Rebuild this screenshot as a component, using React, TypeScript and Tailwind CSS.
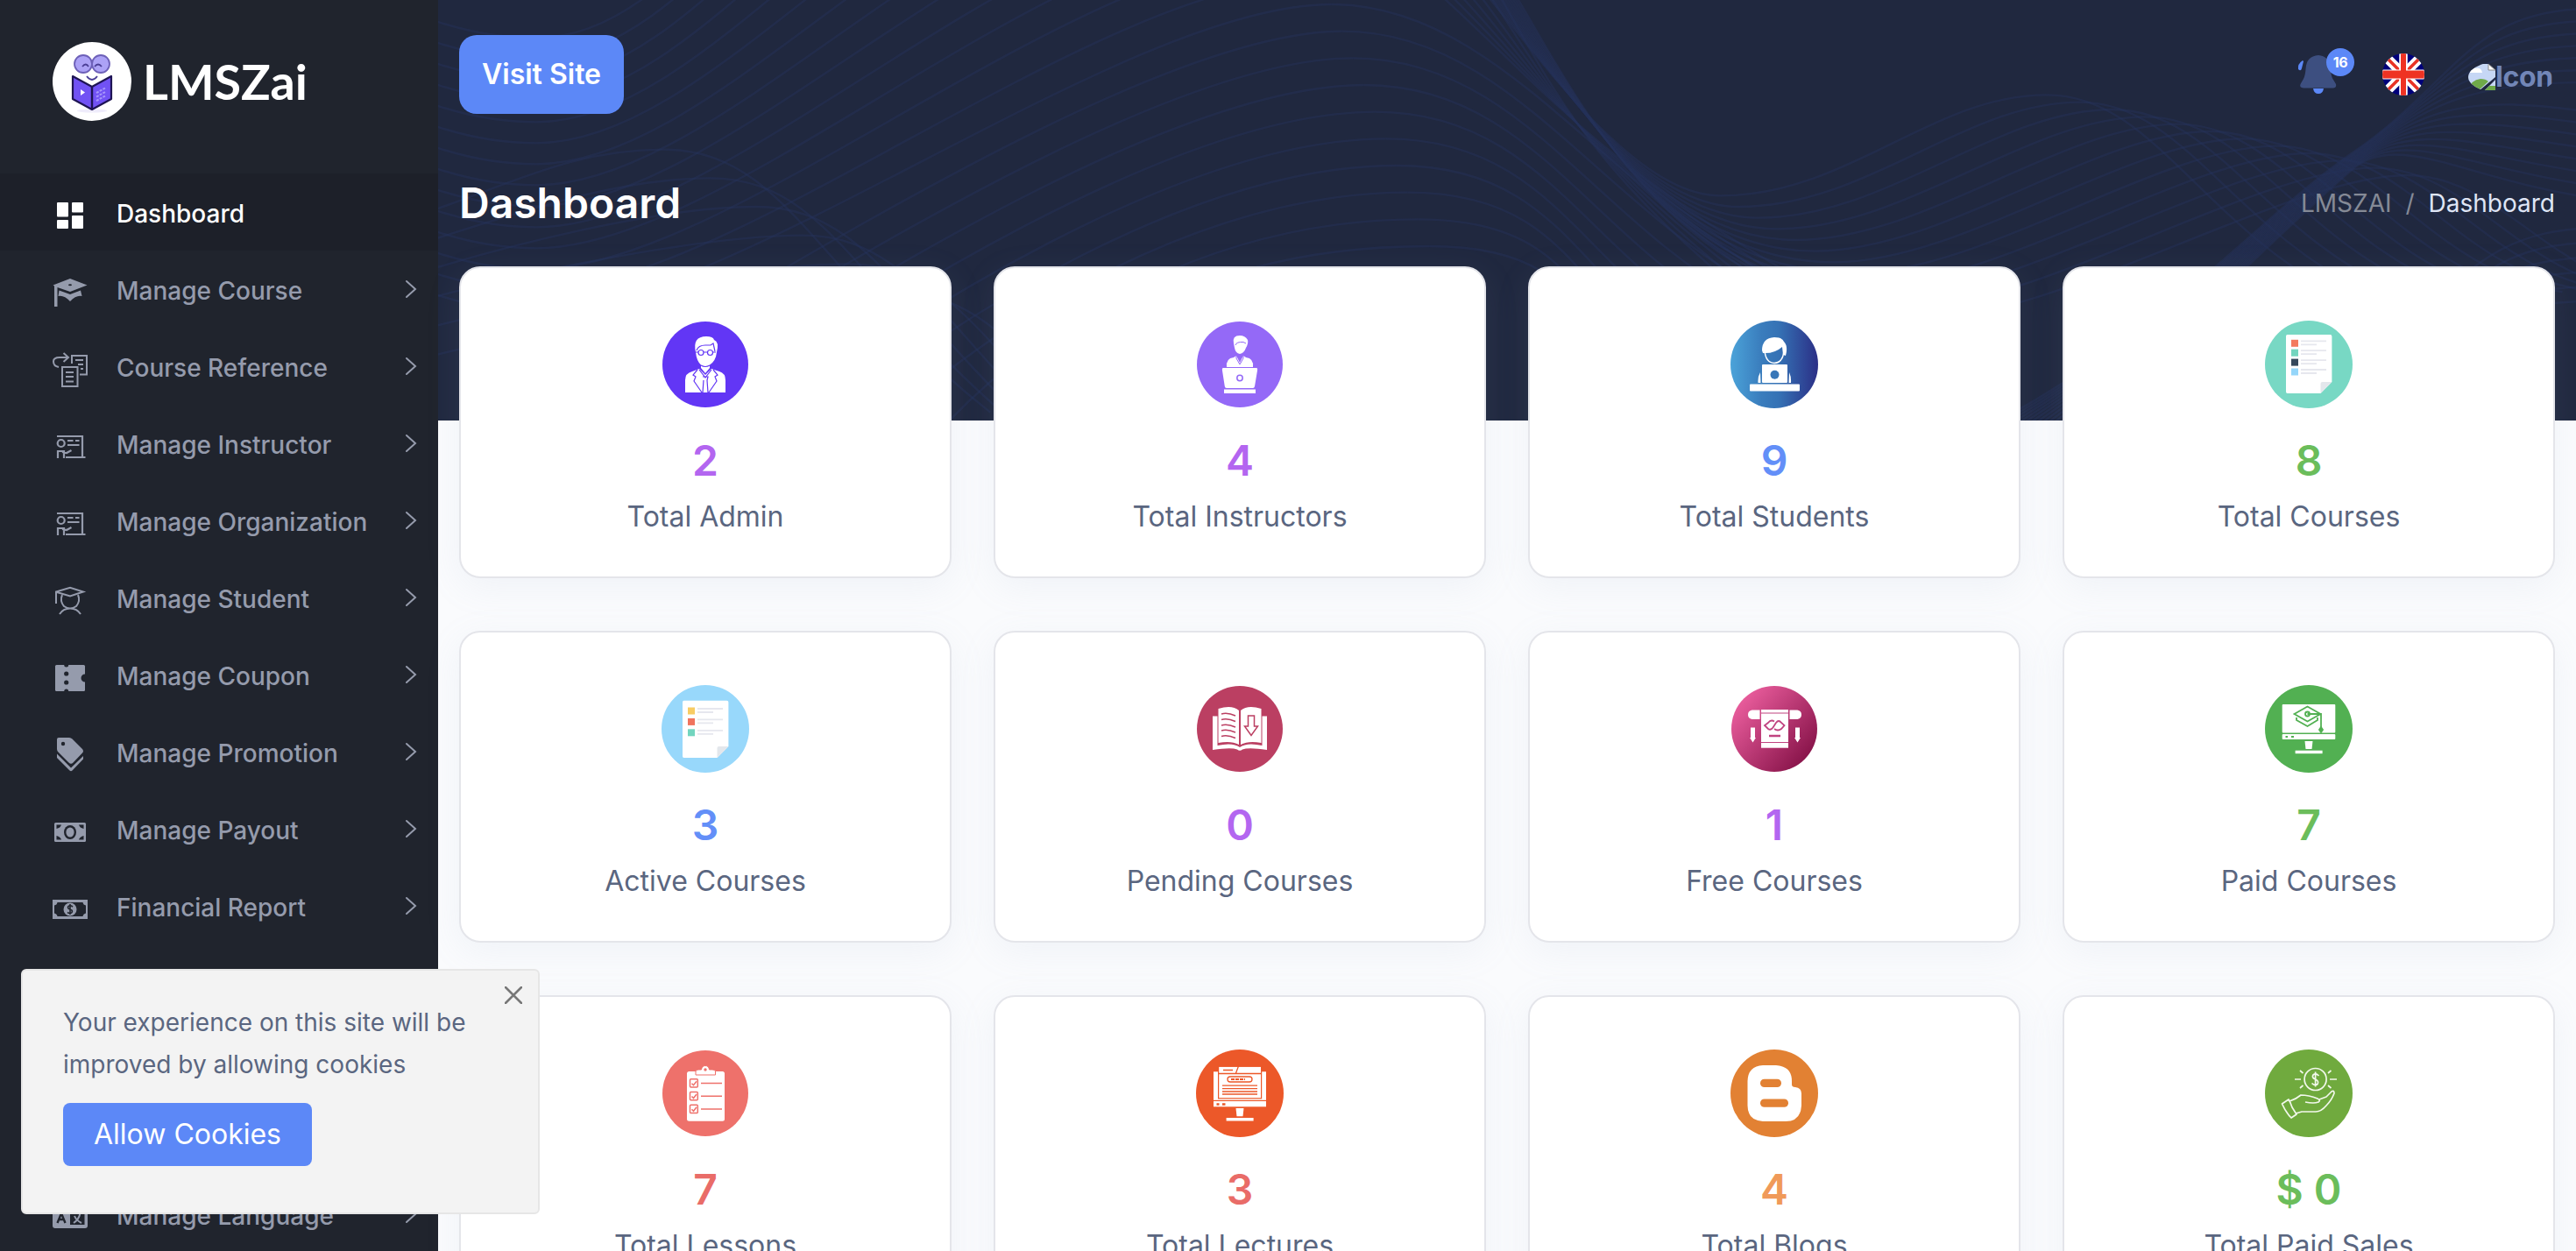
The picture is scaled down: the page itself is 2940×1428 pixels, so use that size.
import React from "react";

const INK = "#20242d";
const range = (n: number) => Array.from({ length: n }, (_, i) => i);

/* ---------- header line pattern ---------- */

function wavePaths(): string[] {
  const out: string[] = [];
  // long swells: left trough, tall crest, fall to the right
  range(23).forEach((k) => {
    const t = 130 + 72 * k;
    const cy = 15 + 92 * (k - 13);
    const cx = 655 + (k - 13) * 8;
    const end = 672 + k * 9;
    if (k < 14) {
      out.push(
        `M-60,${t - 200} C-20,${t - 60} 30,${t} 72,${t} C215,${t} ${cx - 270 + k * 9},${cy} ${cx},${cy}`
      );
    } else {
      out.push(`M${60 + (k - 14) * 45},1440 C${200 + (k - 14) * 35},1100 ${cx - 150},${cy} ${cx},${cy}`);
    }
    if (k >= 13) {
      const d = k - 13;
      out.push(`M${cx},${cy} C${cx + 120},${cy} ${850 - d * 2},${620 + d * 60} ${975 - d * 10},${940 + d * 40}`);
    } else if (k % 2 === 0) {
      out.push(`M${725 + k * 4},-60 C${800 + k},250 ${850 - k},560 ${990 - k * 2},${end + 260}`);
    }
  });
  // centre-right swells
  range(12).forEach((i) => {
    const ty = 670 + i * 38;
    const tx = 940 + i * 14;
    const px = 1180 + i * 24;
    const py = 325 + i * 25;
    out.push(
      `M${765 + i * 2},-40 C${815 + i},240 ${880 + i * 2},${ty} ${tx},${ty} C${tx + 95},${ty} ${px - 85},${py} ${px},${py} C${px + 75},${py} ${px + 110},${py + 420} ${px + 210},1000`
    );
  });
  // right bundle fanning towards the top edge
  range(15).forEach((i) => {
    const y = 30 + i * 42;
    out.push(
      `M${1120 + i * 5},${1500} C${1260 + i * 2},${1180 - i * 6} ${1330 + i * 3},${760 - i * 4} ${1405},${520 + i * 4} S${1490},${y} ${1580},${y + (i > 6 ? 60 : 0)}`
    );
  });
  // lower-left hills
  range(6).forEach((i) => {
    const px = 165 + i * 34;
    const py = 512 + i * 98;
    out.push(
      `M-30,${py + 250} C50,${py + 130} ${px - 70},${py} ${px},${py} C${px + 90},${py} ${px + 110},${py + 420} ${px + 240},${py + 900}`
    );
  });
  // lower-right hills
  range(6).forEach((i) => {
    out.push(`M${1450 + i * 8},1100 C${1500 + i * 6},${850 + i * 40} 1530,${790 + i * 50} 1580,${780 + i * 50}`);
  });
  return out;
}

function Waves() {
  return (
    <svg className="absolute inset-0 h-full w-full" viewBox="0 0 1568 1440" preserveAspectRatio="none" fill="none">
      {wavePaths().map((d, i) => (
        <path key={i} d={d} stroke="#263259" strokeOpacity="0.48" strokeWidth="2.4" vectorEffect="non-scaling-stroke" />
      ))}
    </svg>
  );
}

/* ---------- sidebar icons (40 x 40) ---------- */

const icons: Record<string, React.ReactNode> = {
  dash: (
    <>
      <rect x="5" y="5" width="13" height="16.500" rx="1" />
      <rect x="5" y="25" width="13" height="10" rx="1" />
      <rect x="22" y="5" width="13" height="11.500" rx="1" />
      <rect x="22" y="20" width="13" height="15" rx="1" />
    </>
  ),
  cap: (
    <>
      <path d="M20 4L39.500 11.500L20 19L5.500 14V36H2V12.500L.500 11.500Z" />
      <path d="M7.500 17.500L20 22L32 17.500L33.500 24Q27 22.500 20 30Q13 22.500 6.500 24Z" />
      <ellipse cx="20" cy="11.200" rx="2" ry="1" fill={INK} />
    </>
  ),
  ref: (
    <g fill="none" stroke="currentColor" strokeWidth="2">
      <path d="M7 17Q1 16 1 10.500Q1 6 8 6H18M12.500 1L18 6L12.500 11" />
      <path d="M22 13V4H39V25.500H31M26 9H35M29 14H35M32 19H35" />
      <rect x="11" y="17" width="17.500" height="22" />
      <path d="M15 23H24M15 28H24M15 33.500H24" />
    </g>
  ),
  teach: (
    <g fill="none" stroke="currentColor" strokeWidth="2.200">
      <path d="M5 8H34V31M15 32H37.500" />
      <circle cx="9.700" cy="16" r="4" />
      <path d="M6 33V25H13V33M11 26L16 27L21.500 24M17 13H23.500M26 13H30.500M17 18H30.500" />
    </g>
  ),
  student: (
    <g fill="none" stroke="currentColor" strokeWidth="2">
      <path d="M4 23V9.500L20 4.800L35 9.500L20 14.500L5 10" />
      <path d="M11 13Q8 20 13 26Q20 31 27 26Q32 20 29 13M8 35Q12 28.500 20 28.500T32 35" />
    </g>
  ),
  coupon: (
    <>
      <rect x="3" y="5" width="34" height="30" rx="1.500" />
      <g fill={INK}>
        <circle cx="15.700" cy="5" r="2.500" />
        <circle cx="15.700" cy="15" r="2.600" />
        <circle cx="15.700" cy="25" r="2.600" />
        <circle cx="15.700" cy="35" r="2.500" />
        <circle cx="37" cy="20" r="4.500" />
      </g>
    </>
  ),
  tag: (
    <>
      <path d="M7 0H19Q21 0 22.500 1.500L34 13Q36 15.500 34 17.500L23.500 28.500Q21 31 18.500 28.500L6.500 16.500Q5 15 5 13V2Q5 0 7 0Z" />
      <path d="M5 18.500L21 34.500L35 21V24.500L22.500 37.500Q21 39 19.500 37.500L5 23Z" />
      <circle cx="12" cy="7" r="2.200" fill={INK} />
    </>
  ),
  cash: (
    <>
      <rect x="2" y="9" width="36" height="22" rx="1.500" />
      <g fill={INK}>
        <ellipse cx="20" cy="20" rx="7" ry="8" />
        <path d="M4.500 11.500H10Q9 15 4.500 16ZM35.500 11.500H30Q31 15 35.500 16ZM4.500 28.500H10Q9 25 4.500 24ZM35.500 28.500H30Q31 25 35.500 24Z" />
      </g>
      <ellipse cx="20" cy="20" rx="4.600" ry="5.600" />
    </>
  ),
  bill: (
    <>
      <rect x="0" y="9" width="40" height="22" />
      <path d="M5.500 12H34.500Q35 15 38 15.500V24.500Q35 25 34.500 28H5.500Q5 25 2 24.500V15.500Q5 15 5.500 12Z" fill={INK} />
      <circle cx="20" cy="20" r="7.500" />
      <path d="M23 17Q20 14.800 18 16.500Q16.500 19 20 20T22 23.500Q20 25.500 17 23.500M20 14V26" fill="none" stroke={INK} strokeWidth="1.600" />
    </>
  ),
  lang: (
    <>
      <rect x="0" y="5" width="40" height="27" rx="3" />
      <rect x="20" y="8" width="16.500" height="20" fill={INK} />
      <path d="M5.500 26L10 15L14.500 26M7 22H13" fill="none" stroke={INK} strokeWidth="2.400" />
      <path d="M23 15H34M31.500 15Q30 22 24 26M25 18Q27 23 33 26M28.500 11V15" fill="none" stroke="currentColor" strokeWidth="2" />
    </>
  ),
};

const nav: [string, string][] = [
  ["cap", "Manage Course"],
  ["ref", "Course Reference"],
  ["teach", "Manage Instructor"],
  ["teach", "Manage Organization"],
  ["student", "Manage Student"],
  ["coupon", "Manage Coupon"],
  ["tag", "Manage Promotion"],
  ["cash", "Manage Payout"],
  ["bill", "Financial Report"],
];

function NavItem({ icon, label, active }: { icon: string; label: string; active?: boolean }) {
  return (
    <div className={`flex h-[88px] shrink-0 items-center pl-[60px] pr-6 ${active ? "bg-[#1d2029] text-white" : "text-[#959bac]"}`}>
      <svg className="mt-2 size-10 shrink-0" viewBox="0 0 40 40" fill="currentColor">
        {icons[icon]}
      </svg>
      <span className="ml-[33px] mt-1 whitespace-nowrap text-[28px] font-medium leading-10">{label}</span>
      {!active && (
        <svg className="ml-auto h-[22px] w-[14px] shrink-0" viewBox="0 0 14 22" fill="none" stroke="currentColor" strokeWidth="2" strokeLinecap="round">
          <path d="M2 2L12 11L2 20" />
        </svg>
      )}
    </div>
  );
}

function Logo() {
  return (
    <div className="flex h-[198px] shrink-0 items-start pl-[60px] pt-12">
      <svg width="300" height="90" viewBox="0 0 300 90">
        <circle cx="45" cy="45" r="45" fill="#fff" />
        <ellipse cx="45" cy="78.500" rx="17" ry="2" fill="#efecfb" />
        <g fill="#aca2f6" stroke="#6d60b8" strokeWidth="1.800">
          <circle cx="35" cy="25" r="10" />
          <circle cx="55" cy="25" r="10" />
        </g>
        <path d="M34 28Q38 23 41 28M48 28Q52 23 56 28M39 39Q45 47 51 39" fill="none" stroke="#4b3f96" strokeWidth="1.800" />
        <path d="M23 39L45 51L67 39V65L45 77L23 65Z" fill="#7152f4" stroke="#1e1454" strokeWidth="2.200" strokeLinejoin="round" />
        <path d="M45 51V77" stroke="#1e1454" strokeWidth="2.400" />
        <path d="M32 54L37 57.500L32 61Z" fill="#fff" />
        <path d="M50 58L61 52M50 62.500L61 56.500M50 67L61 61" stroke="#a796fb" strokeWidth="2" strokeDasharray="3 1.200" />
        <text x="103" y="65.500" fill="#fff" fontFamily="Lato, sans-serif" fontWeight="700" fontSize="54.500" textLength="188" lengthAdjust="spacingAndGlyphs">
          LMSZai
        </text>
      </svg>
    </div>
  );
}

/* ---------- card artwork (100 x 100) ---------- */

function Sheet({ top, colors, step, y0 }: { top: number; colors: string[]; step: number; y0: number }) {
  return (
    <>
      <path d={`M25.500 ${top}H74.500Q76.400 ${top} 76.400 ${top + 2}V70L63.500 83H25.500Q24 83 24 81V${top + 2}Q24 ${top} 25.500 ${top}Z`} fill="#fff" />
      <path d="M63.500 83V72Q63.500 70 65.500 70H76.400Z" fill="#e3e7ec" />
      {colors.map((c, i) => (
        <g key={c}>
          <rect x="30" y={y0 + i * step} width="8" height="8" fill={c} />
          <path d={`M41 ${y0 + 1.500 + i * step}H70M41 ${y0 + 5.500 + i * step}H59`} stroke="#e6e7ee" strokeWidth="1.800" />
        </g>
      ))}
    </>
  );
}

const art: Record<string, React.ReactNode> = {
  admin: (
    <>
      <circle cx="50" cy="50" r="49" fill="#6236f5" />
      <path d="M39 36Q35 18 51 18Q59 18 60 22Q66 24 63 36Q62 46 55 50.500V54L50 60L45 54V50.500Q40 46 39 36Z" fill="#fff" />
      <path d="M27 82V68Q27 60 35 58L43 55L50 62L57 55L66 58Q73 60 73 68V82Z" fill="#fff" />
      <g fill="none" stroke="#6236f5" strokeWidth="1.200">
        <path d="M40 34Q42 28 50 28H56L59 26L61 35M38.500 36H42M58.500 36H62M48 36H52.500" />
        <circle cx="45" cy="36.500" r="3" />
        <circle cx="55.500" cy="36.500" r="3" />
        <path d="M45 51Q50 54 55 51M41 56L36 62L39 64L37 69L46 82M59 56L64 62L61 64L63 69L54 82M43 56L50 65L57 56M47 64H53L52 68L53 82M48 68L47 82" />
      </g>
    </>
  ),
  instructor: (
    <>
      <circle cx="50" cy="50" r="49" fill="#9469f7" />
      <path d="M43 26Q41 17 50 17Q56 17 59 22Q60 26 57 31Q55 37 50 38Q45 37 44 31Z" fill="#fff" />
      <path d="M35 53Q34 43 43 42L46 40L50 48L54 40L57 42Q66 43 65 53Z" fill="#fff" />
      <path d="M31 54H69Q70.500 54 70 57L67 75Q66.500 77 65 77H35Q33 77 32.800 75L30 57Q29.500 54 31 54Z" fill="#fff" />
      <path d="M45 28Q46 24 54 24.500L57 26M46 38V43L50 50L54 43V38" fill="none" stroke="#9469f7" strokeWidth="1" />
      <circle cx="50" cy="65.500" r="3.200" fill="none" stroke="#9469f7" strokeWidth="1.500" />
      <rect x="32" y="78.500" width="36" height="4.500" fill="#fff" />
    </>
  ),
  student: (
    <>
      <defs>
        <linearGradient id="blue" x1="0" x2="1">
          <stop offset="0" stopColor="#4ba3d9" />
          <stop offset=".35" stopColor="#3a7dbd" />
          <stop offset=".55" stopColor="#3572b5" />
          <stop offset="1" stopColor="#2b2f86" />
        </linearGradient>
      </defs>
      <circle cx="50" cy="50" r="50" fill="url(#blue)" />
      <path d="M39 34Q40 48 50 48.500Q60 48 61 34" fill="none" stroke="#fff" strokeWidth="1.500" />
      <path d="M36 34Q36 20 50 19Q59 19 61 24Q66 29 63 40L60 39L59 30Q50 38 37 37Z" fill="#fff" />
      <path d="M34 59Q31 64 31.500 71H34.500ZM67 59Q69.500 64 69 71H66.500Z" fill="#fff" />
      <rect x="36" y="50" width="29" height="21" rx="1" fill="#fff" />
      <circle cx="50.500" cy="61.700" r="5" fill="#3877b8" />
      <rect x="22" y="72.500" width="57" height="8" rx="1" fill="#fff" />
    </>
  ),
  courses: (
    <>
      <circle cx="50" cy="50" r="50" fill="#78d8c4" />
      <Sheet top={16} y0={21.800} step={10.900} colors={["#f37b5f", "#73d5bf", "#35485c", "#95d6fa"]} />
    </>
  ),
  active: (
    <>
      <circle cx="50" cy="50" r="50" fill="#98d8fb" />
      <Sheet top={17.800} y0={25.500} step={12.400} colors={["#f8cc63", "#f0745e", "#73d5bf"]} />
    </>
  ),
  pending: (
    <>
      <circle cx="50" cy="50" r="49" fill="#bb3f62" />
      <path d="M19 35.500H24.500V69Q42 65 50 71Q58 65 75.500 69V35.500H81V74Q60 71 53 73.500Q50 76 47 73.500Q40 71 19 74Z" fill="#fff" />
      <path d="M25.500 27Q41 22 49 29V68Q40 63 25.500 66ZM51 29Q59 22 74.500 27V66Q60 63 51 68Z" fill="#fff" />
      <g fill="none" stroke="#bb3f62" strokeWidth="1.500">
        <path d="M29 33Q36 31 45 35M29 39.500Q36 37.500 45 41.500M29 46Q36 44 45 48M29 52Q36 50 45 54M29 58.500Q36 56.500 45 60.500" />
        <path d="M59.500 35H66.500V47H70.500L63 57.500L55.500 47H59.500Z" />
      </g>
    </>
  ),
  free: (
    <>
      <defs>
        <linearGradient id="pink" x1=".1" y1=".15" x2=".9" y2=".85">
          <stop offset="0" stopColor="#ea5d9d" />
          <stop offset="1" stopColor="#871349" />
        </linearGradient>
      </defs>
      <circle cx="50" cy="50" r="49" fill="url(#pink)" />
      <g fill="#fff">
        <path d="M33.500 28.500V39H24.500Q20 38 20 33.700T24.500 28.500ZM67.500 28.500V39H76.500Q81 38 81 33.700T76.500 28.500Z" />
        <rect x="35" y="28" width="31" height="43.700" />
        <path d="M23 48.500H28V60H29L25.500 65.500L22 60H23ZM74 48.500H79V60H80L76.500 65.500L73 60H74Z" />
      </g>
      <g stroke="#c04380" fill="none" strokeWidth="1.800">
        <path d="M35 32H66M35 65.500H66" strokeWidth="1" />
        <path d="M44 58H57" strokeWidth="2.500" />
        <path d="M50 41.500Q46 39 43 43L39 46L43 50Q46 52 48.500 48.500L52 43Q55 39 58 43L61.500 46L58 50Q54 53 50 50" />
      </g>
    </>
  ),
  paid: (
    <>
      <circle cx="50" cy="50" r="50" fill="#52b052" />
      <g fill="#fff">
        <rect x="19.700" y="22" width="60.600" height="32.500" rx="1" />
        <rect x="19.700" y="56" width="60.600" height="6" rx="1" />
        <path d="M45.500 64H54.500L53.500 73H46.500Z" />
        <rect x="34.600" y="74.700" width="31" height="3.500" />
      </g>
      <g fill="none" stroke="#52b052" strokeWidth="1.800">
        <path d="M33.500 33L48.500 24.500L63.500 33L48.500 41.500ZM36 37V40L48.500 47L60 40V37M48.500 33H64V48" />
        <circle cx="48.500" cy="33" r="2.500" />
        <path d="M64 48L62 51L64 54L66 51Z" fill="#52b052" />
        <path d="M23.500 59H26M30 59H33" strokeWidth="2" />
      </g>
    </>
  ),
  lessons: (
    <>
      <circle cx="50" cy="50" r="49" fill="#ee716b" />
      <rect x="29" y="25" width="43" height="56.800" rx="2.500" fill="#fff" />
      <path d="M39 29V25Q39 23 42 23H45.500Q46 18.500 50 18.500T54.500 23H58Q61.500 23 61.500 25V29Z" fill="#fff" stroke="#ee716b" strokeWidth="1" />
      <circle cx="50" cy="23" r="1.700" fill="#ee716b" />
      {[33.700, 48.500, 63.300].map((y) => (
        <g key={y} fill="none" stroke="#ee716b" strokeWidth="1.500">
          <rect x="32.500" y={y} width="8.800" height="9.300" rx="1" />
          <path d={`M34.500 ${y + 5}L36.500 ${y + 7}L40 ${y + 2.500}M45 ${y + 4.700}H69`} />
        </g>
      ))}
    </>
  ),
  lectures: (
    <>
      <circle cx="50" cy="50" r="50" fill="#ec5829" />
      <g fill="#fff">
        <rect x="20" y="25.300" width="60" height="32.500" />
        <rect x="20" y="59" width="60" height="6.300" />
        <rect x="25.600" y="19.300" width="49" height="36.500" stroke="#ec5829" strokeWidth="1.200" />
        <path d="M45.500 67H54.500L53.500 76.300H46.500Z" />
        <rect x="34.600" y="78" width="31" height="3.500" />
      </g>
      <g fill="none" stroke="#ec5829" strokeWidth="1.300">
        <path d="M25.600 27.500H74.400M48.500 19L45.500 27M31 23.500H42" />
        <rect x="36" y="31" width="28" height="6" rx="3" />
        <path d="M40 34H56" strokeWidth="2" strokeDasharray="4 1" />
        <path d="M30 41.200H70M30 44.700H70M30 48H70M30 51H70" />
        <path d="M23.500 62.500H26.500M30 62.500H33.500" strokeWidth="2.500" />
      </g>
    </>
  ),
  blogs: (
    <>
      <circle cx="50" cy="50" r="50" fill="#e28133" />
      <path d="M37 18H52Q70 19 70 36V40Q70 43 74 43Q81 44 81 50V64Q80 82 63 82H37Q19.500 81 19.500 64V36Q20 19 37 18Z" fill="#fff" />
      <rect x="34" y="33.700" width="24" height="9.300" rx="4.600" fill="#e28133" />
      <rect x="34" y="56.500" width="32" height="9.300" rx="4.600" fill="#e28133" />
    </>
  ),
  sales: (
    <>
      <circle cx="50" cy="50" r="50" fill="#70aa3e" />
      <g fill="none" stroke="#f2f8ec" strokeWidth="1.700" strokeLinejoin="round">
        <circle cx="57.600" cy="34" r="12.500" />
        <path d="M61.500 30Q58 26.500 55 29Q53 32 57.500 34T60 39.500Q57 42 53.500 38.500M57.600 25.500V42.500" />
        <path d="M34 34H41M74 34H82M40 24L43.500 27M75.500 24L72 27M40 44L43.500 41M75.500 44L72 41" />
        <path d="M19.500 62L27 57Q29 60 31 66L36 74L30 78Q24 72 19.500 62ZM28 59Q35 57 41 52Q50 52 60 56Q64 58 61 60Q56 62 46 60M62 57L70 54L76 48Q79 46 79 50Q76 58 70 64Q64 71 58 71H42L35 73" />
      </g>
    </>
  ),
};

const cards: [string, string, string, string][] = [
  ["admin", "2", "Total Admin", "text-[#b366f0]"],
  ["instructor", "4", "Total Instructors", "text-[#b366f0]"],
  ["student", "9", "Total Students", "text-[#638ff8]"],
  ["courses", "8", "Total Courses", "text-[#6bbd5b]"],
  ["active", "3", "Active Courses", "text-[#638ff8]"],
  ["pending", "0", "Pending Courses", "text-[#b366f0]"],
  ["free", "1", "Free Courses", "text-[#b366f0]"],
  ["paid", "7", "Paid Courses", "text-[#6bbd5b]"],
  ["lessons", "7", "Total Lessons", "text-[#e96c68]"],
  ["lectures", "3", "Total Lectures", "text-[#e96c68]"],
  ["blogs", "4", "Total Blogs", "text-[#f09a59]"],
  ["sales", "$ 0", "Total Paid Sales", "text-[#6bbd5b]"],
];

function Card({ icon, value, label, tone }: { icon: string; value: string; label: string; tone: string }) {
  return (
    <div className="flex h-[356px] flex-col items-center rounded-[24px] border-2 border-[#e4e5ea] bg-white pt-[60px] shadow-[0_10px_40px_rgba(150,165,200,0.10)]">
      <svg className="size-[100px] shrink-0" viewBox="0 0 100 100">
        {art[icon]}
      </svg>
      <div className={`mt-[31px] text-[48px] font-semibold leading-[58px] ${tone}`}>{value}</div>
      <div className="mt-[11px] text-[32px] leading-[48px] text-[#5a6680]">{label}</div>
    </div>
  );
}

/* ---------- top bar ---------- */

function Bell() {
  return (
    <div className="relative h-[48px] w-[48px]">
      <svg className="h-[48px] w-[48px]" viewBox="0 0 48 48">
        <path d="M26 2Q38 3 40 16Q40 26 43 30L46 35Q47 39 43 39.500H9Q4 39 5.500 35L9 29Q11 25 11.500 18Q12 3 26 2Z" fill="#3d4f80" />
        <path d="M20 40H32Q31 46 26 46T20 40Z" fill="#5c88f7" />
        <path d="M8 8Q2 12 3 18Q6 21 7 17L9 9Z" fill="#5c88f7" />
      </svg>
      <span className="absolute -top-[6px] left-[35px] flex size-8 items-center justify-center rounded-full bg-[#5c88f7] text-[16px] font-bold tracking-tight text-white">
        16
      </span>
    </div>
  );
}

function Flag() {
  return (
    <svg className="ml-[51px] size-12 rounded-full" viewBox="0 0 48 48">
      <rect width="48" height="48" fill="#00007b" />
      <path d="M0 0L48 48M48 0L0 48" stroke="#fff" strokeWidth="11" />
      <path d="M0 0L24 24M48 0L24 24M0 48L24 24M48 48L24 24" stroke="#e83325" strokeWidth="3.600" />
      <path d="M24 0V48M0 24H48" stroke="#fff" strokeWidth="9.500" />
      <path d="M0 24H48" stroke="#fff" strokeWidth="11" />
      <path d="M24 0V48" stroke="#ef3323" strokeWidth="6" />
      <path d="M0 24H48" stroke="#ef3323" strokeWidth="9" />
    </svg>
  );
}

function Avatar() {
  return (
    <div className="ml-[50px] mt-[6px] flex h-[40px] w-[99px] items-center overflow-hidden rounded-[50%]">
      <svg className="h-[32px] w-[32px] shrink-0" viewBox="0 0 32 32">
        <path d="M0 1H23V8H31V16L13 31H0Z" fill="#c6d7f5" />
        <path d="M0 31Q3 19 14 18Q20 18 23 21L12 31Z" fill="#6faa49" />
        <path d="M2 10Q4 5 9 6Q15 5 16 11H2Z" fill="#fff" />
        <path d="M31 19V31H19Z" fill="#c6d7f5" />
        <path d="M31 26V31H19L24 26Z" fill="#6faa49" />
        <path d="M23 1V8H31Z" fill="#fff" stroke="#8d8d8d" strokeWidth="1" />
      </svg>
      <span className="-ml-[1px] text-[32px] font-bold leading-10 tracking-[-0.4px] text-[#7286b7]">Icon</span>
    </div>
  );
}

export default function App() {
  return (
    <div className="flex h-[1428px] w-[2940px] overflow-hidden bg-[#fafbfd] font-['Inter',sans-serif]">
      <aside className="flex w-[500px] shrink-0 flex-col bg-[#20242d]">
        <Logo />
        <NavItem icon="dash" label="Dashboard" active />
        {nav.map(([icon, label]) => (
          <NavItem key={label} icon={icon} label={label} />
        ))}
        <div className="h-[264px] shrink-0" />
        <NavItem icon="lang" label="Manage Language" />
      </aside>

      <main className="relative flex-1">
        <div className="absolute inset-x-0 top-0 h-[480px] overflow-hidden bg-[#20283f]">
          <Waves />
        </div>
        <div className="relative flex flex-col px-6">
          <header className="flex h-[170px] items-center justify-between">
            <a className="flex h-[90px] w-[188px] items-center justify-center rounded-[20px] bg-[#5c88f7] text-[32px] font-semibold text-white">
              Visit Site
            </a>
            <div className="flex items-center">
              <Bell />
              <Flag />
              <Avatar />
            </div>
          </header>
          <div className="flex h-[134px] items-center justify-between pb-[10px]">
            <h1 className="text-[48px] font-semibold leading-[58px] text-white">Dashboard</h1>
            <div className="flex text-[28px] leading-[42px] text-[#858a96]">
              <span>LMSZAI</span>
              <span className="px-4">/</span>
              <span className="text-[#dfe5f5]">Dashboard</span>
            </div>
          </div>
          <div className="grid grid-cols-4 gap-x-12 gap-y-[60px]">
            {cards.map(([icon, value, label, tone]) => (
              <Card key={label} icon={icon} value={value} label={label} tone={tone} />
            ))}
          </div>
        </div>
      </main>

      <div className="absolute left-6 top-[1106px] h-[280px] w-[592px] rounded-[6px] border-2 border-[#e6e6e6] bg-[#f3f3f3] px-[46px] pt-[35px]">
        <svg className="absolute right-[18px] top-[18px] size-[20px]" viewBox="0 0 20 20" stroke="#777" strokeWidth="2.500" strokeLinecap="round">
          <path d="M1 1L19 19M19 1L1 19" />
        </svg>
        <p className="whitespace-nowrap text-[28px] leading-[48px] text-[#5a6680]">
          Your experience on this site will be
          <br />
          improved by allowing cookies
        </p>
        <button className="mt-5 flex h-[72px] w-[284px] items-center justify-center rounded-[8px] bg-[#5c88f7] text-[32px] text-white">
          Allow Cookies
        </button>
      </div>
    </div>
  );
}
